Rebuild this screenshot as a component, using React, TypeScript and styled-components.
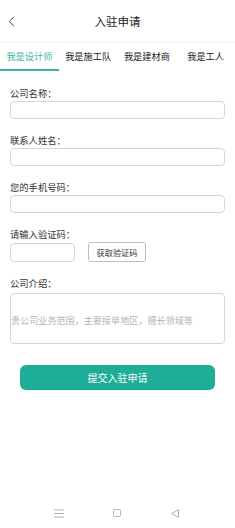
import React from 'react'
import styled, { createGlobalStyle } from 'styled-components'

const tabs = ['我是设计师', '我是施工队', '我是建材商', '我是工人']

const fields = ['公司名称：', '联系人姓名：', '您的手机号码：']

const App = () => {
  return (
    <Page>
      <GlobalStyle />
      <Header>
        <Back>
          <svg width="7" height="11" viewBox="0 0 7 11">
            <path d="M6 0.8 L1.4 5.5 L6 10.2" fill="none" stroke="#444" strokeWidth="1" />
          </svg>
        </Back>
        <Title>入驻申请</Title>
      </Header>
      <Tabs>
        {tabs.map((t, i) => (
          <Tab key={t} active={i === 0}>{t}</Tab>
        ))}
      </Tabs>
      <Form>
        {fields.map((f) => (
          <Field key={f}>
            <Label>{f}</Label>
            <Input />
          </Field>
        ))}
        <Field>
          <Label>请输入验证码：</Label>
          <CodeRow>
            <CodeInput />
            <CodeButton>获取验证码</CodeButton>
          </CodeRow>
        </Field>
        <Field>
          <Label>公司介绍：</Label>
          <Area placeholder="贵公司业务范围，主要接单地区，擅长领域等" />
        </Field>
        <Submit>提交入驻申请</Submit>
      </Form>
      <NavBar>
        <NavSlot>
          <svg width="10" height="9" viewBox="0 0 10 9">
            <path d="M0 1 H10 M0 4.5 H10 M0 8 H10" stroke="#aaa" strokeWidth="0.9" />
          </svg>
        </NavSlot>
        <NavSlot>
          <svg width="8" height="8" viewBox="0 0 8 8">
            <rect x="0.5" y="0.5" width="7" height="7" rx="1.2" fill="none" stroke="#aaa" strokeWidth="0.9" />
          </svg>
        </NavSlot>
        <NavSlot>
          <svg width="8" height="9" viewBox="0 0 8 9">
            <path d="M7.5 0.6 V8.4 L0.7 4.5 Z" fill="none" stroke="#aaa" strokeWidth="0.9" strokeLinejoin="round" />
          </svg>
        </NavSlot>
      </NavBar>
    </Page>
  )
}

export default App

const GlobalStyle = createGlobalStyle`
  * { box-sizing: border-box; }
  body {
    margin: 0;
    background: #fff;
    font-family: "Noto Sans CJK SC", "Noto Sans", sans-serif;
    color: #333;
  }
`

const Page = styled.div`
  width: 235px;
  min-height: 528px;
  display: flex;
  flex-direction: column;
  background: #fff;
`

const Header = styled.div`
  height: 43px;
  display: flex;
  align-items: center;
  justify-content: center;
  position: relative;
  border-bottom: 1px solid #f1f1f1;
`

const Back = styled.div`
  position: absolute;
  left: 8px;
  top: 16px;
  display: flex;
`

const Title = styled.div`
  font-size: 11.5px;
  color: #222;
  margin-top: -1px;
`

const Tabs = styled.div`
  display: flex;
  height: 28px;
`

const Tab = styled.div<{ active?: boolean }>`
  flex: 1;
  display: flex;
  align-items: center;
  justify-content: center;
  font-size: 9.2px;
  color: ${(p) => (p.active ? '#3db7a4' : '#222')};
  border-bottom: 2px solid ${(p) => (p.active ? '#3db7a4' : 'transparent')};
`

const Form = styled.div`
  padding: 15px 10px 0;
  display: flex;
  flex-direction: column;
`

const Field = styled.div`
  display: flex;
  flex-direction: column;
  gap: 1px;
  margin-bottom: 14px;
`

const Label = styled.div`
  font-size: 9.3px;
  line-height: 14px;
  color: #333;
`

const Input = styled.input`
  width: 100%;
  height: 18px;
  border: 1px solid #d6d6d6;
  border-radius: 4px;
  outline: none;
  background: #fff;
`

const CodeRow = styled.div`
  display: flex;
  align-items: center;
  gap: 13px;
  padding-top: 1px;
`

const CodeInput = styled.input`
  width: 65px;
  height: 19px;
  border: 1px solid #d6d6d6;
  border-radius: 4px;
  outline: none;
`

const CodeButton = styled.button`
  width: 58px;
  height: 20px;
  margin-top: -1px;
  padding: 0;
  border: 1px solid #bdbdbd;
  border-radius: 3px;
  background: #fff;
  font-family: inherit;
  font-size: 8.2px;
  color: #333;
`

const Area = styled.textarea`
  width: 100%;
  height: 51px;
  margin-top: 2px;
  padding: 20px 0 0;
  border: 1px solid #d6d6d6;
  border-radius: 4px;
  outline: none;
  resize: none;
  font-family: inherit;
  font-size: 9.1px;
  line-height: 12px;
  &::placeholder {
    color: #b3b3b3;
  }
`

const Submit = styled.button`
  margin: 7px 10px 0;
  height: 25px;
  border: none;
  border-radius: 6px;
  background: #1eae97;
  color: #fff;
  font-family: inherit;
  font-size: 10px;
`

const NavBar = styled.div`
  margin-top: auto;
  height: 30px;
  display: flex;
  justify-content: center;
  align-items: center;
  padding-right: 2px;
`

const NavSlot = styled.div`
  width: 58px;
  display: flex;
  justify-content: center;
`
